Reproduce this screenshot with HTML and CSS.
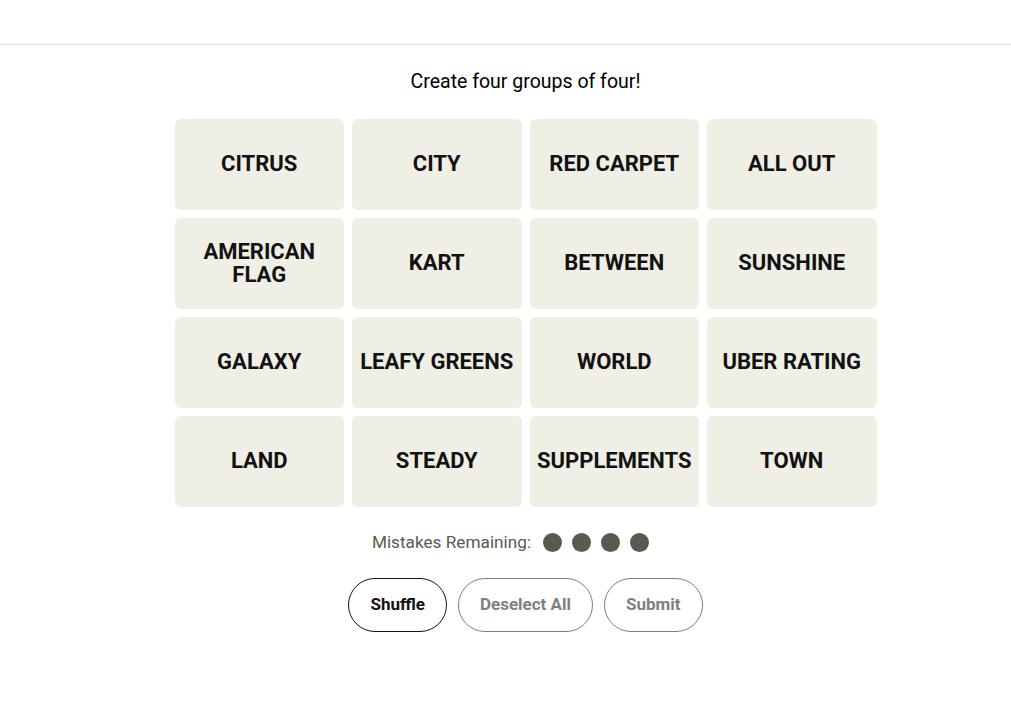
FILE: index.html
```html
<!DOCTYPE html>
<html lang="en">
<head>
    <meta charset="UTF-8">
    <meta name="viewport" content="width=device-width, initial-scale=1.0">
    <title>Connections</title>
    <link rel="stylesheet" href="styles.css">
</head>
<body>
    <header class="topbar"></header>

    <main class="game">
        <p class="prompt">Create four groups of four!</p>

        <div class="board">
            <div class="tile">CITRUS</div>
            <div class="tile">CITY</div>
            <div class="tile">RED CARPET</div>
            <div class="tile">ALL OUT</div>
            <div class="tile">AMERICAN FLAG</div>
            <div class="tile">KART</div>
            <div class="tile">BETWEEN</div>
            <div class="tile">SUNSHINE</div>
            <div class="tile">GALAXY</div>
            <div class="tile">LEAFY GREENS</div>
            <div class="tile">WORLD</div>
            <div class="tile">UBER RATING</div>
            <div class="tile">LAND</div>
            <div class="tile">STEADY</div>
            <div class="tile">SUPPLEMENTS</div>
            <div class="tile">TOWN</div>
        </div>

        <div class="mistakes">
            <span>Mistakes Remaining:</span>
            <span class="dots">
                <span class="dot"></span>
                <span class="dot"></span>
                <span class="dot"></span>
                <span class="dot"></span>
            </span>
        </div>

        <div class="actions">
            <button class="btn">Shuffle</button>
            <button class="btn disabled">Deselect All</button>
            <button class="btn disabled">Submit</button>
        </div>
    </main>
</body>
</html>
```

FILE: styles.css
```css
body {
    margin: 0;
    font-family: Roboto, "Liberation Sans", sans-serif;
    background: #fff;
    color: #000;
}
.topbar {
    height: 44px;
    border-bottom: 1px solid #dcdcdc;
}
.game {
    padding-left: 40px;
    display: flex;
    flex-direction: column;
    align-items: center;
}
.prompt {
    margin: 25px 0 25px;
    font-size: 19.5px;
    line-height: 24px;
    font-weight: 400;
    color: #000;
}
.board {
    width: 702px;
    display: grid;
    grid-template-columns: repeat(4, 1fr);
    grid-auto-rows: 91px;
    gap: 8px;
}
.tile {
    background: #efefe6;
    border-radius: 6px;
    display: flex;
    align-items: center;
    justify-content: center;
    text-align: center;
    font-size: 22px;
    font-weight: 700;
    line-height: 23px;
    color: #121212;
    padding: 0 4px 2px;
}
.mistakes {
    margin-top: 25px;
    display: flex;
    align-items: center;
    gap: 12px;
    font-size: 17.2px;
    line-height: 20px;
    font-weight: 400;
    color: #5a594e;
}
.dots {
    display: flex;
    gap: 10px;
    margin-right: 30px;
}
.dot {
    width: 19px;
    height: 19px;
    border-radius: 50%;
    background: #5a594e;
}
.actions {
    margin-top: 26px;
    display: flex;
    gap: 11px;
}
.btn {
    height: 54px;
    padding: 0 21px 2px;
    border: 1px solid #121212;
    border-radius: 27px;
    background: #fff;
    font-family: Roboto, "Liberation Sans", sans-serif;
    font-size: 17px;
    font-weight: 700;
    color: #121212;
    cursor: pointer;
}
.btn.disabled {
    border-color: #7f7f7f;
    color: #7f7f7f;
}
```
